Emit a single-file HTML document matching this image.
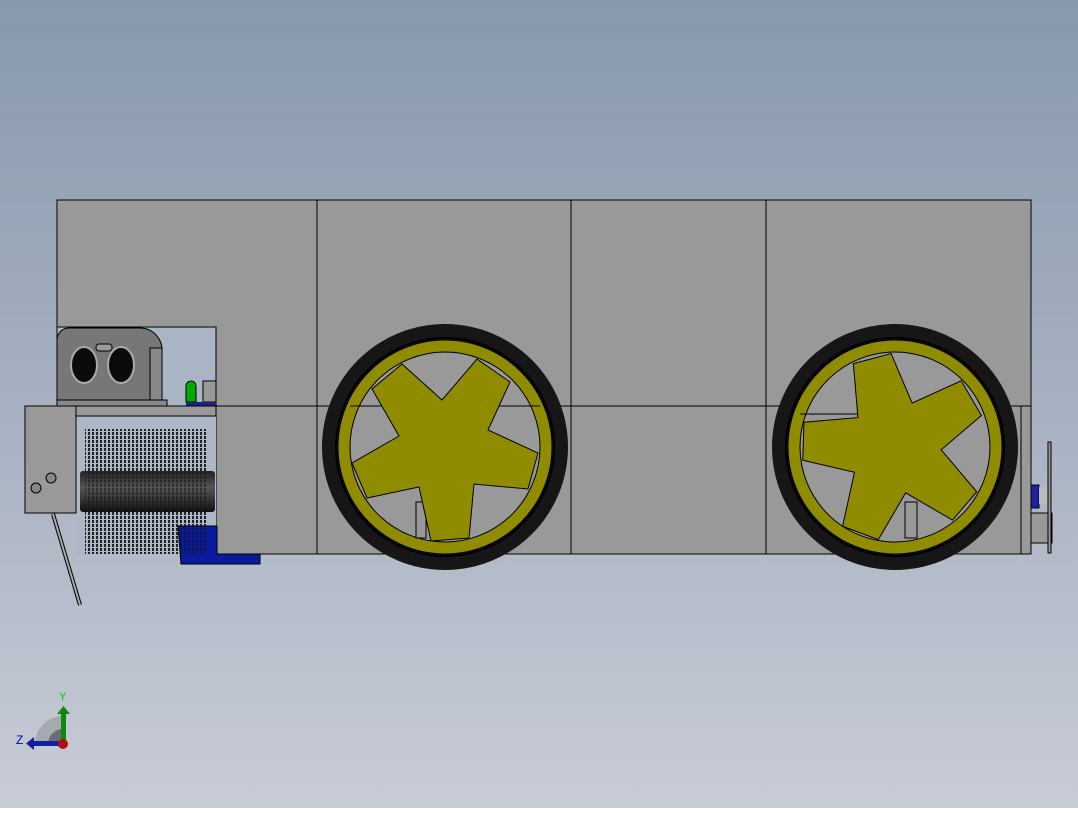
<!DOCTYPE html><html><head><style>body{margin:0;width:1078px;height:808px;overflow:hidden}</style></head><body>
<svg width="1078" height="808" viewBox="0 0 1078 808" xmlns="http://www.w3.org/2000/svg">
<defs>
<linearGradient id="bg" x1="0" y1="0" x2="0" y2="1"><stop offset="0" stop-color="#8899ad"/><stop offset="0.5" stop-color="#a6b0c1"/><stop offset="1" stop-color="#c8ccd6"/></linearGradient>
<pattern id="br" width="4" height="4" patternUnits="userSpaceOnUse"><rect width="2" height="3" fill="#111"/></pattern>
<linearGradient id="roll" x1="0" y1="0" x2="0" y2="1"><stop offset="0" stop-color="#222"/><stop offset="0.4" stop-color="#555"/><stop offset="1" stop-color="#111"/></linearGradient>
<g id="star"><polygon points="-43,-83 -3,-47 32,-88 65,-65 43,-17 93,6 83,42 29,37 24,91 -14,94 -26,40 -78,51 -93,16 -46,-11 -73,-58" fill="#8f8c00" stroke="#000" stroke-width="1"/></g>
</defs>
<rect width="1078" height="808" fill="url(#bg)"/>
<g stroke="#000" stroke-width="1" fill="#999">
<path d="M57,200H1031V554H216V406H57Z"/>
<line x1="317" y1="200" x2="317" y2="554"/><line x1="571" y1="200" x2="571" y2="554"/><line x1="766" y1="200" x2="766" y2="554"/>
<line x1="216" y1="406" x2="1031" y2="406"/><line x1="1021" y1="406" x2="1021" y2="554"/>
</g>
<rect x="57" y="327" width="159" height="79" fill="#a9b4c4" stroke="#000"/>
<rect x="76" y="406" width="140" height="148" fill="#adb7c6"/>
<path d="M57,406V340a12,12 0 0 1 12,-12H140a22,22 0 0 1 22,22V406Z" fill="#777" stroke="#000"/>
<rect x="150" y="348" width="12" height="58" fill="#888" stroke="#000"/>
<rect x="57" y="400" width="110" height="6" fill="#888" stroke="#000"/>
<ellipse cx="84" cy="365" rx="13" ry="18" fill="#0b0b0b" stroke="#aaa" stroke-width="2"/>
<ellipse cx="121" cy="365" rx="13" ry="18" fill="#0b0b0b" stroke="#aaa" stroke-width="2"/>
<rect x="96" y="344" width="16" height="7" rx="3" fill="#999" stroke="#000"/>
<path d="M186,402v-16a5,5 0 0 1 10,0v16Z" fill="#0a0" stroke="#000"/>
<rect x="203" y="381" width="13" height="21" fill="#999" stroke="#000"/>
<rect x="186" y="402" width="30" height="4" fill="#1a237e"/>
<rect x="76" y="406" width="140" height="10" fill="#999" stroke="#000"/>
<rect x="85" y="429" width="123" height="125" fill="url(#br)" opacity="0.9"/>
<rect x="80" y="471" width="135" height="41" rx="3" fill="url(#roll)"/>
<rect x="85" y="471" width="123" height="41" fill="url(#br)" opacity="0.5"/>
<path d="M178,526h39v28h43v10H181Z" fill="#0a1a9c" stroke="#000"/>
<rect x="178" y="526" width="30" height="28" fill="url(#br)" opacity="0.6"/>
<rect x="25" y="406" width="51" height="107" fill="#999" stroke="#000"/>
<circle cx="51" cy="478" r="5" fill="#888" stroke="#000"/><circle cx="36" cy="488" r="5" fill="#888" stroke="#000"/>
<line x1="53" y1="514" x2="80" y2="605" stroke="#000" stroke-width="4"/><line x1="53" y1="514" x2="80" y2="605" stroke="#aaa" stroke-width="2"/>
<rect x="1031" y="485" width="8" height="23" fill="#1a23a0" stroke="#000"/>
<rect x="1039" y="487" width="9" height="17" fill="#bbb"/>
<rect x="1031" y="513" width="21" height="30" fill="#999" stroke="#000"/>
<rect x="1048" y="442" width="3" height="111" fill="#999" stroke="#000"/>
<g transform="translate(445,447)">
<circle r="123" fill="#161616"/><circle r="109" fill="none" stroke="#000" stroke-width="2"/>
<circle r="107" fill="#8f8c00" stroke="#000"/><circle r="95" fill="#999" stroke="#000"/>
<line x1="-95" y1="-41" x2="95" y2="-41" stroke="#000"/>
<rect x="-29" y="55" width="10" height="36" fill="#999" stroke="#000"/>
<use href="#star"/>
</g>
<g transform="translate(895,447)">
<circle r="123" fill="#161616"/><circle r="109" fill="none" stroke="#000" stroke-width="2"/>
<circle r="107" fill="#8f8c00" stroke="#000"/><circle r="95" fill="#999" stroke="#000"/>
<path d="M-95,-33H-34V-80" fill="none" stroke="#000"/>
<rect x="10" y="55" width="12" height="36" fill="#999" stroke="#000"/>
<use href="#star" transform="rotate(25)"/>
</g>
<path d="M35,744A28,28 0 0 1 63,716V744Z" fill="#a6a9b0"/>
<path d="M48,744A15,15 0 0 1 63,729V744Z" fill="#6a6d73"/>
<rect x="61" y="713" width="5" height="31" fill="#0a8a0a"/><polygon points="57,714 70,714 63.5,706" fill="#0a8a0a"/>
<rect x="33" y="741" width="30" height="5" fill="#1020a0"/><polygon points="34,737 34,750 26,743.5" fill="#1020a0"/>
<circle cx="63" cy="744" r="5" fill="#b01010"/>
<text x="59" y="700" font-family="Liberation Sans,sans-serif" font-size="11" fill="#0c0">Y</text>
<text x="16" y="744" font-family="Liberation Sans,sans-serif" font-size="12" fill="#00c">Z</text>
</svg>
</body></html>
